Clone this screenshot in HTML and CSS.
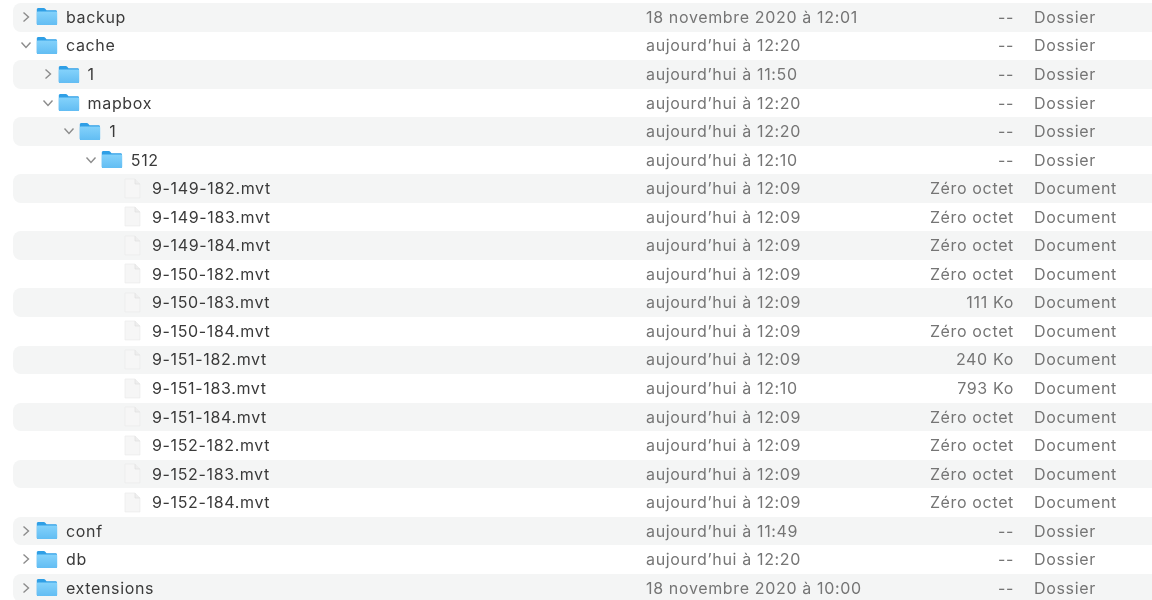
FILE: index.html
```html
<!DOCTYPE html>
<html lang="fr">
<head>
  <meta charset="UTF-8">
  <title>Finder</title>
  <link rel="stylesheet" href="styles.css">
</head>
<body>

<svg class="defs" width="0" height="0">
  <defs>
    <linearGradient id="folderFill" x1="0" y1="0" x2="0" y2="1">
      <stop offset="0" stop-color="#84d2fb"/>
      <stop offset="1" stop-color="#62bdf3"/>
    </linearGradient>
    <symbol id="folder" viewBox="0 0 22 19">
      <path d="M2.500 1h5.200c.8 0 1.200.3 1.800 1l1 1.200h9c1 0 1.500.5 1.500 1.500V16.500c0 1-.6 1.500-1.600 1.500H2.400c-1 0-1.600-.5-1.600-1.500V2.500C.8 1.500 1.500 1 2.500 1z" fill="#2f9fe6"/>
      <path d="M.8 5.600c0-.8.5-1.200 1.300-1.200h17.800c.8 0 1.300.4 1.300 1.200v10.900c0 1-.6 1.500-1.600 1.500H2.400c-1 0-1.600-.5-1.600-1.500z" fill="url(#folderFill)"/>
    </symbol>
    <symbol id="file" viewBox="0 0 17 21">
      <path d="M1 1h10l5 5v14H1z" fill="#f6f6f6" stroke="#e9e9e9" stroke-width=".6"/>
      <path d="M11 1v5h5" fill="#eeeeee" stroke="#dedede" stroke-width=".6"/>
    </symbol>
    <symbol id="closed" viewBox="0 0 12 12">
      <path d="M3.500 1.500 8.500 6l-5 4.500" fill="none" stroke="#8c8c8c" stroke-width="1.400"/>
    </symbol>
    <symbol id="open" viewBox="0 0 12 12">
      <path d="M1.500 3.500 6 8.500l4.500-5" fill="none" stroke="#8c8c8c" stroke-width="1.400"/>
    </symbol>
  </defs>
</svg>

<div class="list">

  <div class="row">
    <div class="name lvl0"><svg class="arrow"><use href="#closed"/></svg><svg class="folder"><use href="#folder"/></svg><span>backup</span></div>
    <div class="date">18 novembre 2020 à 12:01</div><div class="size">--</div><div class="kind">Dossier</div>
  </div>
  <div class="row">
    <div class="name lvl0"><svg class="arrow"><use href="#open"/></svg><svg class="folder"><use href="#folder"/></svg><span>cache</span></div>
    <div class="date">aujourd’hui à 12:20</div><div class="size">--</div><div class="kind">Dossier</div>
  </div>
  <div class="row">
    <div class="name lvl1"><svg class="arrow"><use href="#closed"/></svg><svg class="folder"><use href="#folder"/></svg><span>1</span></div>
    <div class="date">aujourd’hui à 11:50</div><div class="size">--</div><div class="kind">Dossier</div>
  </div>
  <div class="row">
    <div class="name lvl1"><svg class="arrow"><use href="#open"/></svg><svg class="folder"><use href="#folder"/></svg><span>mapbox</span></div>
    <div class="date">aujourd’hui à 12:20</div><div class="size">--</div><div class="kind">Dossier</div>
  </div>
  <div class="row">
    <div class="name lvl2"><svg class="arrow"><use href="#open"/></svg><svg class="folder"><use href="#folder"/></svg><span>1</span></div>
    <div class="date">aujourd’hui à 12:20</div><div class="size">--</div><div class="kind">Dossier</div>
  </div>
  <div class="row">
    <div class="name lvl3"><svg class="arrow"><use href="#open"/></svg><svg class="folder"><use href="#folder"/></svg><span>512</span></div>
    <div class="date">aujourd’hui à 12:10</div><div class="size">--</div><div class="kind">Dossier</div>
  </div>

  <div class="row">
    <div class="name lvl4"><svg class="file"><use href="#file"/></svg><span>9-149-182.mvt</span></div>
    <div class="date">aujourd’hui à 12:09</div><div class="size">Zéro octet</div><div class="kind">Document</div>
  </div>
  <div class="row">
    <div class="name lvl4"><svg class="file"><use href="#file"/></svg><span>9-149-183.mvt</span></div>
    <div class="date">aujourd’hui à 12:09</div><div class="size">Zéro octet</div><div class="kind">Document</div>
  </div>
  <div class="row">
    <div class="name lvl4"><svg class="file"><use href="#file"/></svg><span>9-149-184.mvt</span></div>
    <div class="date">aujourd’hui à 12:09</div><div class="size">Zéro octet</div><div class="kind">Document</div>
  </div>
  <div class="row">
    <div class="name lvl4"><svg class="file"><use href="#file"/></svg><span>9-150-182.mvt</span></div>
    <div class="date">aujourd’hui à 12:09</div><div class="size">Zéro octet</div><div class="kind">Document</div>
  </div>
  <div class="row">
    <div class="name lvl4"><svg class="file"><use href="#file"/></svg><span>9-150-183.mvt</span></div>
    <div class="date">aujourd’hui à 12:09</div><div class="size">111 Ko</div><div class="kind">Document</div>
  </div>
  <div class="row">
    <div class="name lvl4"><svg class="file"><use href="#file"/></svg><span>9-150-184.mvt</span></div>
    <div class="date">aujourd’hui à 12:09</div><div class="size">Zéro octet</div><div class="kind">Document</div>
  </div>
  <div class="row">
    <div class="name lvl4"><svg class="file"><use href="#file"/></svg><span>9-151-182.mvt</span></div>
    <div class="date">aujourd’hui à 12:09</div><div class="size">240 Ko</div><div class="kind">Document</div>
  </div>
  <div class="row">
    <div class="name lvl4"><svg class="file"><use href="#file"/></svg><span>9-151-183.mvt</span></div>
    <div class="date">aujourd’hui à 12:10</div><div class="size">793 Ko</div><div class="kind">Document</div>
  </div>
  <div class="row">
    <div class="name lvl4"><svg class="file"><use href="#file"/></svg><span>9-151-184.mvt</span></div>
    <div class="date">aujourd’hui à 12:09</div><div class="size">Zéro octet</div><div class="kind">Document</div>
  </div>
  <div class="row">
    <div class="name lvl4"><svg class="file"><use href="#file"/></svg><span>9-152-182.mvt</span></div>
    <div class="date">aujourd’hui à 12:09</div><div class="size">Zéro octet</div><div class="kind">Document</div>
  </div>
  <div class="row">
    <div class="name lvl4"><svg class="file"><use href="#file"/></svg><span>9-152-183.mvt</span></div>
    <div class="date">aujourd’hui à 12:09</div><div class="size">Zéro octet</div><div class="kind">Document</div>
  </div>
  <div class="row">
    <div class="name lvl4"><svg class="file"><use href="#file"/></svg><span>9-152-184.mvt</span></div>
    <div class="date">aujourd’hui à 12:09</div><div class="size">Zéro octet</div><div class="kind">Document</div>
  </div>

  <div class="row">
    <div class="name lvl0"><svg class="arrow"><use href="#closed"/></svg><svg class="folder"><use href="#folder"/></svg><span>conf</span></div>
    <div class="date">aujourd’hui à 11:49</div><div class="size">--</div><div class="kind">Dossier</div>
  </div>
  <div class="row">
    <div class="name lvl0"><svg class="arrow"><use href="#closed"/></svg><svg class="folder"><use href="#folder"/></svg><span>db</span></div>
    <div class="date">aujourd’hui à 12:20</div><div class="size">--</div><div class="kind">Dossier</div>
  </div>
  <div class="row">
    <div class="name lvl0"><svg class="arrow"><use href="#closed"/></svg><svg class="folder"><use href="#folder"/></svg><span>extensions</span></div>
    <div class="date">18 novembre 2020 à 10:00</div><div class="size">--</div><div class="kind">Dossier</div>
  </div>

</div>

</body>
</html>
```

FILE: styles.css
```css
body {
  margin: 0;
  height: 600px;
  overflow: hidden;
  background-color: white;
  font-family: Inter, "Noto Sans", sans-serif;
  font-size: 16px;
  letter-spacing: .65px;
  color: #757575;
}
.defs {
  display: block;
  height: 0;
}
.list {
  padding: 3px 0 0 13px;
  filter: blur(.35px);
}
.row {
  display: flex;
  align-items: center;
  box-sizing: border-box;
  height: 28.550px;
  padding-bottom: .7px;
  border-radius: 8px 0 0 8px;
}
.row:nth-child(odd) {
  background-color: #f4f5f5;
}
.name {
  display: flex;
  align-items: center;
  box-sizing: border-box;
  flex-shrink: 0;
  width: 633px;
  color: #3a3a3a;
}
.lvl0 { padding-left: 7px; }
.lvl1 { padding-left: 28.600px; }
.lvl2 { padding-left: 50.200px; }
.lvl3 { padding-left: 71.800px; }
.lvl4 { padding-left: 111px; }
.arrow {
  flex-shrink: 0;
  width: 12px;
  height: 12px;
  margin-right: 4px;
}
.folder {
  flex-shrink: 0;
  width: 22px;
  height: 19px;
  margin-right: 8px;
}
.file {
  flex-shrink: 0;
  width: 17px;
  height: 21px;
  margin-right: 11px;
}
.date {
  flex-shrink: 0;
  width: 260px;
}
.size {
  flex-shrink: 0;
  width: 108px;
  text-align: right;
  white-space: nowrap;
}
.kind {
  margin-left: 20px;
}
```
